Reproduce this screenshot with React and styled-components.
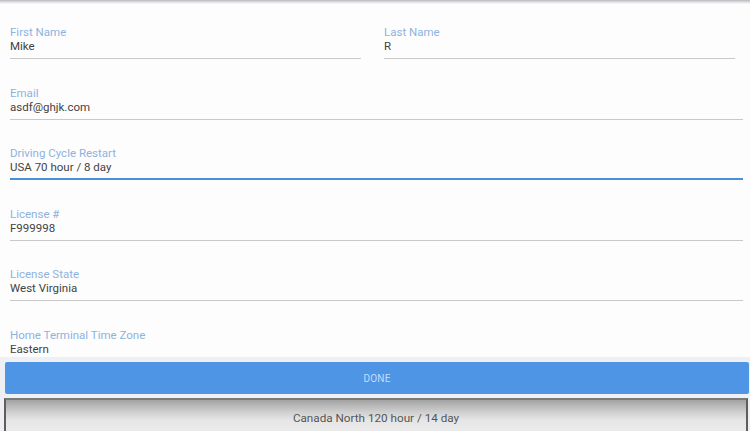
import React from 'react';
import styled, { createGlobalStyle } from 'styled-components';

const GlobalStyle = createGlobalStyle`
  html, body {
    margin: 0;
    padding: 0;
    background: #fdfdfd;
    font-family: Roboto, 'Liberation Sans', sans-serif;
  }
`;

const Page = styled.div`
  display: flex;
  flex-direction: column;
  width: 750px;
  height: 431px;
  overflow: hidden;
  background: #fdfdfd;
`;

const TopShade = styled.div`
  height: 4px;
  flex-shrink: 0;
  background: linear-gradient(#b9b7bd, #e4e4e6 60%, #fbfbfb);
`;

const Form = styled.div`
  display: grid;
  grid-template-columns: 351px 351px;
  column-gap: 23px;
  row-gap: 26.5px;
  align-content: start;
  height: 353px;
  padding: 21px 0 0 10px;
  box-sizing: border-box;
  overflow: hidden;
  flex-shrink: 0;
`;

const Field = styled.div`
  grid-column: ${props => props.wide ? '1 / span 2' : 'auto'};
  width: ${props => props.wide ? '733px' : 'auto'};
  padding-bottom: ${props => props.active ? '4px' : '5px'};
  border-bottom: ${props => props.active ? '2px solid #4a90d9' : '1px solid #c9c9c9'};
`;

const Label = styled.div`
  height: 14px;
  line-height: 14px;
  font-size: 11.5px;
  color: #8db3df;
`;

const Value = styled.div`
  height: 14px;
  line-height: 14px;
  font-size: 11.5px;
  color: #434343;
`;

const Footer = styled.div`
  display: flex;
  flex-direction: column;
  gap: 4px;
  flex: 1;
  padding-top: 5px;
  background: #eef0f3;
`;

const DoneButton = styled.button`
  height: 32px;
  margin: 0 1px 0 5px;
  border: none;
  border-radius: 2px;
  background: #4f95e6;
  color: #c4dcf8;
  font: 400 10px Roboto, 'Liberation Sans', sans-serif;
  letter-spacing: 0.2px;
`;

const Picker = styled.div`
  display: flex;
  justify-content: center;
  align-items: center;
  height: 36px;
  margin: 0 2px 0 4px;
  padding-top: 1px;
  border: 2px solid #5e5e5e;
  border-bottom: none;
  border-top-color: #7a7a7a;
  background: linear-gradient(#a2a2a2, #cfcfcf 35%, #e6e6e6 60%, #ececec);
  color: #555;
  font-size: 11.7px;
  box-sizing: border-box;
`;

const fields = [
  { label: 'First Name', value: 'Mike' },
  { label: 'Last Name', value: 'R' },
  { label: 'Email', value: 'asdf@ghjk.com', wide: true },
  { label: 'Driving Cycle Restart', value: 'USA 70 hour / 8 day', wide: true, active: true },
  { label: 'License #', value: 'F999998', wide: true },
  { label: 'License State', value: 'West Virginia', wide: true },
  { label: 'Home Terminal Time Zone', value: 'Eastern', wide: true },
];

const App = () => (
  <>
    <GlobalStyle />
    <Page>
      <TopShade />
      <Form>
        {fields.map(f => (
          <Field key={f.label} wide={f.wide} active={f.active}>
            <Label>{f.label}</Label>
            <Value>{f.value}</Value>
          </Field>
        ))}
      </Form>
      <Footer>
        <DoneButton>DONE</DoneButton>
        <Picker>Canada North 120 hour / 14 day</Picker>
      </Footer>
    </Page>
  </>
);

export default App;
